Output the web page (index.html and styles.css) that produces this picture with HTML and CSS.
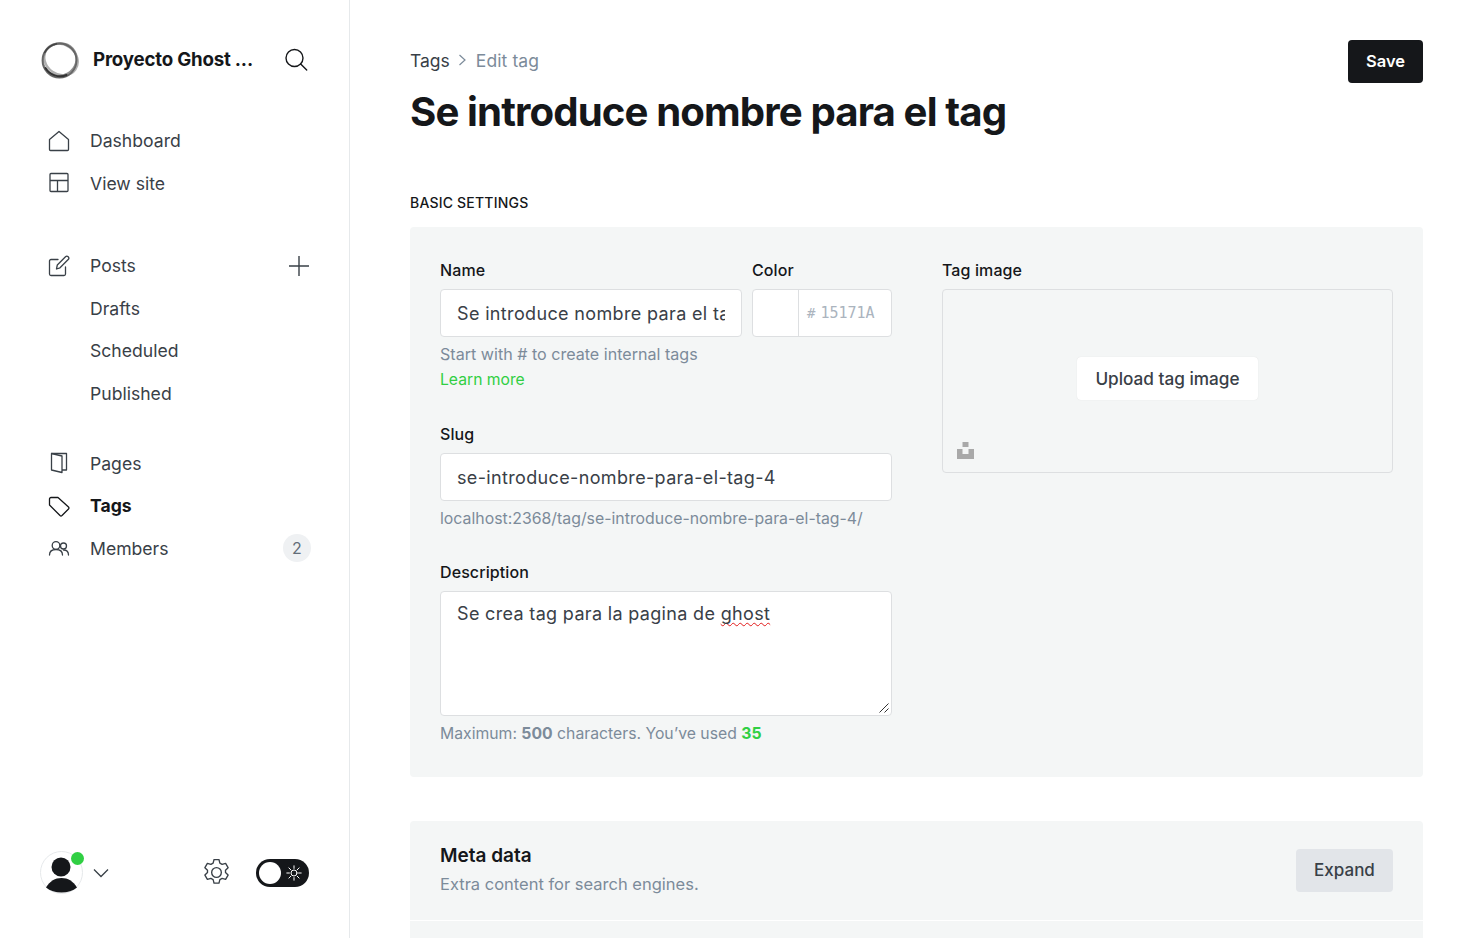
FILE: index.html
```html
<!DOCTYPE html>
<html lang="en">
<head>
<meta charset="utf-8">
<title>Edit tag</title>
<link rel="stylesheet" href="styles.css">
</head>
<body>
<div class="app">
  <aside class="sidebar">
    <div class="brand">
      <svg class="logo" width="40" height="40" viewBox="0 0 40 40" fill="none">
        <ellipse cx="20.500" cy="19" rx="17.500" ry="15" stroke="#b0b0b0" stroke-width="2.400" transform="rotate(35 20 20)"/>
        <ellipse cx="20" cy="19.500" rx="17" ry="16" stroke="#8f8f8f" stroke-width="2" transform="rotate(-30 20 20)"/>
        <ellipse cx="19.500" cy="20.500" rx="17" ry="17" stroke="#666" stroke-width="1.800"/>
        <path d="M5.500 28a17 17 0 0 0 21 7" stroke="#333" stroke-width="2" stroke-linecap="round"/>
        <path d="M4.500 13A17 17 0 0 1 17 3.800" stroke="#444" stroke-width="1.600"/>
      </svg>
      <span class="brand-name">Proyecto Ghost ...</span>
      <svg class="search" width="24" height="24" viewBox="0 0 24 24" fill="none" stroke="#15171a" stroke-width="1.400" stroke-linecap="round"><circle cx="10.500" cy="10" r="8.500"/><path d="M16.700 16l6 6"/></svg>
    </div>

    <nav class="nav-group">
      <a class="nav-item">
        <svg class="ic" width="22" height="22" viewBox="0 0 22 22" fill="none" stroke="#394047" stroke-width="1.300" stroke-linejoin="round"><path d="M1.500 9.500 11 1.500l9.500 8v10a1 1 0 0 1-1 1h-17a1 1 0 0 1-1-1z"/></svg>
        <span>Dashboard</span>
      </a>
      <a class="nav-item">
        <svg class="ic" width="22" height="22" viewBox="0 0 22 22" fill="none" stroke="#394047" stroke-width="1.300" stroke-linejoin="round"><rect x="2" y="1.500" width="18" height="18" rx="1"/><path d="M2 8.500h18M9.500 8.500v11"/></svg>
        <span>View site</span>
      </a>
    </nav>

    <nav class="nav-group">
      <a class="nav-item">
        <svg class="ic" width="22" height="22" viewBox="0 0 22 22" fill="none" stroke="#394047" stroke-width="1.300" stroke-linejoin="round" stroke-linecap="round"><path d="M10 4.500H3a1.500 1.500 0 0 0-1.500 1.500v13A1.500 1.500 0 0 0 3 20.500h13a1.500 1.500 0 0 0 1.500-1.500v-7"/><path d="M8.500 14l.8-4L17.500 1.800a1.800 1.800 0 0 1 2.700 2.700L12 12.800z"/></svg>
        <span>Posts</span>
        <svg class="plus" width="22" height="22" viewBox="0 0 22 22" fill="none" stroke="#394047" stroke-width="1.400"><path d="M11 1v20M1 11h20"/></svg>
      </a>
      <a class="nav-item sub"><span>Drafts</span></a>
      <a class="nav-item sub"><span>Scheduled</span></a>
      <a class="nav-item sub"><span>Published</span></a>
    </nav>

    <nav class="nav-group">
      <a class="nav-item">
        <svg class="ic" width="22" height="22" viewBox="0 0 22 22" fill="none" stroke="#394047" stroke-width="1.300" stroke-linejoin="round"><path d="M3.500 1.500 14 4v16.500L3.500 18z"/><path d="M3.500 1.500H18.500v16.500H14"/></svg>
        <span>Pages</span>
      </a>
      <a class="nav-item active">
        <svg class="ic" width="22" height="22" viewBox="0 0 22 22" fill="none" stroke="#15171a" stroke-width="1.300" stroke-linejoin="round"><path d="M1.500 4a1.500 1.500 0 0 1 1.500-1.500h7L20.500 12a1.500 1.500 0 0 1 0 2L14 20.500a1.500 1.500 0 0 1-2 0L1.500 10z"/></svg>
        <span>Tags</span>
      </a>
      <a class="nav-item">
        <svg class="ic" width="22" height="22" viewBox="0 0 22 22" fill="none" stroke="#394047" stroke-width="1.300" stroke-linecap="round"><circle cx="8" cy="8.500" r="3.800"/><path d="M1.500 18c0-3.500 2.800-5.500 6.500-5.500s6.500 2 6.500 5.500"/><circle cx="15.500" cy="9" r="3"/><path d="M15.500 13c3 0 5 1.800 5 5"/></svg>
        <span>Members</span>
        <span class="count">2</span>
      </a>
    </nav>

    <div class="foot">
      <div class="user">
        <div class="avatar">
          <svg width="44" height="43" viewBox="0 0 44 43"><circle cx="21.500" cy="21.500" r="21" fill="#fff" stroke="#e6e9eb"/><circle cx="21" cy="16" r="9.500" fill="#15171a"/><path d="M6 36.500C10 30 15 27 21.500 27S33 30 37 36.500C33 40 27.500 41.500 21.500 41.500S10 40 6 36.500z" fill="#15171a"/></svg>
          <span class="dot"></span>
        </div>
        <svg class="chev" width="16" height="10" viewBox="0 0 16 10" fill="none" stroke="#394047" stroke-width="1.300"><path d="M1 1.500l7 7 7-7"/></svg>
      </div>
      <div class="foot-right">
        <svg class="gear" width="27" height="27" viewBox="1 1 24 24" fill="none" stroke="#394047" stroke-width="1.200" stroke-linejoin="round"><path d="M10.800 1.500h4.400l.8 3.200 2 1.100 3.100-.9 2.200 3.800-2.300 2.300v2l2.300 2.300-2.200 3.800-3.100-.9-2 1.100-.8 3.200h-4.400l-.8-3.200-2-1.100-3.100.9-2.200-3.800 2.300-2.300v-2L2.700 8.700l2.200-3.800 3.100.9 2-1.100z"/><circle cx="13" cy="13" r="4.300"/></svg>
        <div class="toggle">
          <span class="knob"></span>
          <svg width="16" height="16" viewBox="0 0 16 16" fill="none" stroke="#fff" stroke-width="1" stroke-linecap="round"><circle cx="8" cy="8" r="3"/><path d="M8 .8v2.600M8 12.600v2.600M.8 8h2.600M12.600 8h2.600M2.900 2.900l1.900 1.900M11.200 11.200l1.900 1.900M2.900 13.100l1.900-1.900M11.200 4.800l1.900-1.900"/></svg>
        </div>
      </div>
    </div>
  </aside>

  <main class="main">
    <header class="head">
      <div>
        <div class="crumbs">
          <span class="crumb">Tags</span>
          <svg width="9" height="12" viewBox="0 0 9 12" fill="none" stroke="#7c8b9a" stroke-width="1.200"><path d="M1.500 1l5.500 5-5.500 5"/></svg>
          <span class="crumb-cur">Edit tag</span>
        </div>
        <h1>Se introduce nombre para el tag</h1>
      </div>
      <button class="save">Save</button>
    </header>

    <h4 class="section-title">BASIC SETTINGS</h4>

    <section class="panel basic">
      <div class="left-col">
        <div class="name-row">
          <div class="field-name">
            <label class="lbl">Name</label>
            <input class="input" value="Se introduce nombre para el tag">
          </div>
          <div class="field-color">
            <label class="lbl">Color</label>
            <div class="color-box">
              <span class="swatch"></span>
              <span class="hex"><span class="hash">#</span>15171A</span>
            </div>
          </div>
        </div>
        <p class="hint hint-name">Start with # to create internal tags</p>
        <a class="learn">Learn more</a>

        <label class="lbl lbl-slug">Slug</label>
        <input class="input" value="se-introduce-nombre-para-el-tag-4">
        <p class="hint hint-url">localhost:2368/tag/se-introduce-nombre-para-el-tag-4/</p>

        <label class="lbl lbl-desc">Description</label>
        <div class="textarea">
          Se crea tag para la pagina de <span class="misspelled">ghost</span>
          <svg class="grip" width="12" height="12" viewBox="0 0 12 12" fill="none" stroke="#333" stroke-width="1"><path d="M1.500 10.500 10.500 1.500M6.500 10.500l4-4"/></svg>
        </div>
        <p class="hint hint-count">Maximum: <b>500</b> characters. You’ve used <b class="used">35</b></p>
      </div>

      <div class="right-col">
        <label class="lbl">Tag image</label>
        <div class="uploader">
          <button class="upload">Upload tag image</button>
          <svg class="unsplash" width="17" height="17" viewBox="0 0 17 17" fill="#a9a9a9"><path d="M5.500 0h6v5h-6zM0 7h5.500v5h6V7H17v10H0z"/></svg>
        </div>
      </div>
    </section>

    <section class="panel meta">
      <div class="meta-row">
        <div class="meta-text">
          <div class="meta-title">Meta data</div>
          <div class="meta-sub">Extra content for search engines.</div>
        </div>
        <button class="expand">Expand</button>
      </div>
    </section>
  </main>
</div>
</body>
</html>
```
FILE: styles.css
```css
* { box-sizing: border-box; }
html, body { margin: 0; height: 100%; overflow: hidden; background: #fff; }
body { font-family: Inter, "Liberation Sans", sans-serif; color: #15171a; }
.app { display: flex; height: 938px; }

.sidebar { width: 350px; flex: none; border-right: 1px solid #e6e9eb; padding: 40px 39px 44px 41px; display: flex; flex-direction: column; }
.brand { display: flex; align-items: center; height: 40px; margin-bottom: 39.500px; }
.logo { flex: none; margin-left: -1px; }
.brand-name { margin-left: 13px; font-size: 18.700px; font-weight: 700; letter-spacing: -0.2px; flex: 1; white-space: nowrap; padding-bottom: 2px; }
.search { flex: none; margin-right: 2px; }

.nav-group { display: flex; flex-direction: column; margin-bottom: 40px; }
.nav-group:nth-of-type(3) { margin-bottom: 0; margin-top: -12.500px; }
.nav-item { display: flex; align-items: center; height: 42.500px; font-size: 17.600px; color: #394047; }
.nav-item .ic { flex: none; margin: 0 20px 0 7px; }
.nav-item.sub span { margin-left: 49px; }
.nav-item.active { color: #15171a; font-weight: 700; }
.plus { margin-left: auto; margin-right: 0; }
.count { margin-left: auto; margin-right: -1px; width: 28px; height: 28px; border-radius: 50%; background: #eff1f3; display: flex; align-items: center; justify-content: center; font-size: 16px; color: #626d79; }

.foot { margin-top: auto; display: flex; align-items: center; justify-content: space-between; }
.user { display: flex; align-items: center; margin-left: -1px; }
.avatar { position: relative; width: 44px; height: 43px; }
.avatar svg { display: block; }
.dot { position: absolute; top: 1px; left: 31px; width: 13px; height: 13px; border-radius: 50%; background: #30cf43; }
.chev { margin-left: 9px; }
.foot-right { display: flex; align-items: center; gap: 26px; margin-right: 1px; }
.toggle { width: 53px; height: 28px; border-radius: 14px; background: #15171a; display: flex; align-items: center; justify-content: space-between; padding: 0 7px 0 3px; }
.knob { width: 22px; height: 22px; border-radius: 50%; background: #fff; }

.main { flex: 1; padding: 40px 60px 0; min-width: 0; }
.head { display: flex; justify-content: space-between; align-items: flex-start; }
.crumbs { display: flex; align-items: center; gap: 8.500px; height: 43px; font-size: 17.500px; padding-bottom: 3px; }
.crumb { color: #394047; }
.crumb-cur { color: #7c8b9a; letter-spacing: 0.1px; }
h1 { margin: 3px 0 0; font-size: 40.200px; line-height: 52px; font-weight: 700; letter-spacing: -0.9px; color: #15171a; }
.save { height: 43px; width: 75px; border: 0; border-radius: 4px; background: #15171a; color: #fff; padding: 0 0 2px; font: 600 16.500px Inter, sans-serif; }

.section-title { margin: 56px 0 0; font-size: 14px; line-height: 18px; font-weight: 500; letter-spacing: 0.2px; color: #15171a; }
.panel { background: #f4f6f6; border-radius: 4px; }
.basic { margin-top: 15px; height: 550px; padding: 30px; display: flex; gap: 50px; }
.left-col { width: 452px; flex: none; display: flex; flex-direction: column; }
.right-col { flex: 1; }
.name-row { display: flex; gap: 10px; }
.field-name { width: 302px; }
.field-color { width: 140px; }
.lbl { display: block; height: 26px; font-size: 16px; line-height: 26px; font-weight: 500; margin-top: 0; margin-bottom: 6px; letter-spacing: 0.1px; color: #15171a; }
.input { display: block; width: 100%; height: 48px; border: 1px solid #dddfe1; border-radius: 4px; background: #fff; padding: 0 16px; font: 400 18px Inter, sans-serif; letter-spacing: 0.35px; color: #394047; outline: 0; }
.color-box { display: flex; height: 48px; border: 1px solid #dddfe1; border-radius: 4px; background: #fff; }
.swatch { width: 46px; border-right: 1px solid #dddfe1; }
.hex { flex: 1; font: 400 15px/46px "DejaVu Sans Mono", monospace; color: #abb4be; padding-left: 8px; }
.hash { font-size: 14px; margin-right: 5px; }
.hint { margin: 0; font-size: 15.850px; line-height: 25px; color: #7c8b9a; }
.hint-name { margin-top: 5px; font-size: 16.100px; }
.learn { font-size: 15.700px; line-height: 25px; color: #30cf43; }
.lbl-slug { margin-top: 29px; }
.hint-url { margin-top: 5px; }
.lbl-desc { margin-top: 28px; }
.textarea { position: relative; height: 125px; border: 1px solid #dddfe1; border-radius: 4px; background: #fff; padding: 8px 16px; font-size: 18px; letter-spacing: 0.33px; line-height: 27px; color: #394047; }
.misspelled { text-decoration: underline wavy #e21b1b 1px; text-decoration-skip-ink: none; text-underline-offset: 2px; }
.grip { position: absolute; right: 1px; bottom: 1px; }
.hint-count { margin-top: 5px; font-size: 15.750px; }
.hint-count b { font-weight: 700; }
.used { color: #30cf43; }

.uploader { position: relative; height: 184px; border: 1px solid #dddfe1; border-radius: 4px; display: flex; justify-content: center; padding-top: 67px; }
.upload { height: 43px; width: 181px; border: 0; border-radius: 4px; background: #fff; box-shadow: 0 0 1px rgba(0,0,0,.12); color: #394047; font: 500 17.200px Inter, sans-serif; }
.unsplash { position: absolute; left: 14px; bottom: 13px; }

.meta { margin-top: 44px; height: 140px; }
.meta-row { display: flex; justify-content: space-between; align-items: center; height: 100px; padding: 0 30px; border-bottom: 1px solid #fff; }
.meta-text { padding-bottom: 2px; }
.meta-title { font-size: 19px; line-height: 26px; font-weight: 600; color: #15171a; }
.meta-sub { font-size: 16.500px; line-height: 26px; color: #7c8b9a; margin-top: 2px; }
.expand { width: 97px; height: 43px; border: 0; border-radius: 4px; background: #e2e5e9; color: #394047; padding: 0 0 2px; font: 500 17px Inter, sans-serif; }
```
